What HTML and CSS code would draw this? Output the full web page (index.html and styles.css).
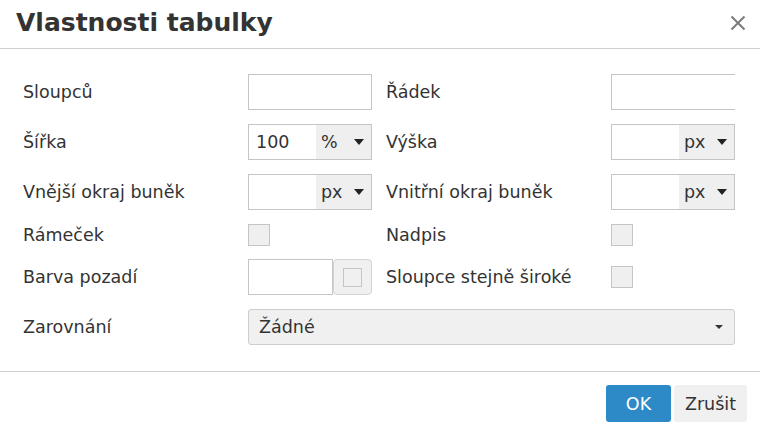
FILE: index.html
```html
<!DOCTYPE html>
<html lang="cs">
<head>
<meta charset="utf-8">
<title>Vlastnosti tabulky</title>
<link rel="stylesheet" href="styles.css">
</head>
<body>
<div class="dialog">
  <div class="head">
    <h1 class="title">Vlastnosti tabulky</h1>
    <button class="close" aria-label="Zavřít">
      <svg width="16" height="16" viewBox="0 0 16 16"><path d="M1.5 1.5 L14.5 14.5 M14.5 1.5 L1.5 14.5" stroke="#7b7b7b" stroke-width="2" fill="none"/></svg>
    </button>
  </div>
  <div class="body">
    <div class="form">
      <label class="lbl">Sloupců</label>
      <div class="ctl"><div class="input"></div></div>
      <label class="lbl lbl-r">Řádek</label>
      <div class="ctl"><div class="input wide"></div></div>

      <label class="lbl">Šířka</label>
      <div class="ctl"><div class="combo"><span class="val">100</span><span class="unit">%<i class="caret"></i></span></div></div>
      <label class="lbl lbl-r">Výška</label>
      <div class="ctl"><div class="combo"><span class="val"></span><span class="unit">px<i class="caret"></i></span></div></div>

      <label class="lbl">Vnější okraj buněk</label>
      <div class="ctl"><div class="combo"><span class="val"></span><span class="unit">px<i class="caret"></i></span></div></div>
      <label class="lbl lbl-r">Vnitřní okraj buněk</label>
      <div class="ctl"><div class="combo"><span class="val"></span><span class="unit">px<i class="caret"></i></span></div></div>

      <label class="lbl">Rámeček</label>
      <div class="ctl"><span class="check"></span></div>
      <label class="lbl lbl-r">Nadpis</label>
      <div class="ctl"><span class="check"></span></div>

      <label class="lbl">Barva pozadí</label>
      <div class="ctl"><div class="color"><span class="color-in"></span><span class="color-btn"><span class="swatch"></span></span></div></div>
      <label class="lbl lbl-r">Sloupce stejně široké</label>
      <div class="ctl"><span class="check"></span></div>

      <label class="lbl">Zarovnání</label>
      <div class="ctl span"><div class="select"><span>Žádné</span><i class="caret small"></i></div></div>
    </div>
  </div>
  <div class="foot">
    <button class="btn primary">OK</button>
    <button class="btn">Zrušit</button>
  </div>
</div>
</body>
</html>
```

FILE: styles.css
```css
* { box-sizing: border-box; }
html, body { margin: 0; padding: 0; background: #fff; }
body {
  font-family: "DejaVu Sans", Verdana, sans-serif;
  font-size: 17.5px;
  color: #333;
  width: 760px;
  height: 435px;
  overflow: hidden;
}
.dialog { width: 760px; }
.head {
  height: 49px;
  border-bottom: 1px solid #cfcfcf;
  display: flex;
  align-items: flex-start;
  justify-content: space-between;
}
.title {
  margin: 0;
  padding: 7px 0 0 16px;
  font-size: 25px;
  font-weight: bold;
  line-height: 32px;
  color: #333;
}
.close {
  border: 0;
  background: none;
  padding: 0;
  margin: 15px 14px 0 0;
  width: 16px;
  height: 16px;
  display: flex;
}
.body {
  padding: 25px 0 26px 23px;
  border-bottom: 1px solid #cfcfcf;
}
.form {
  width: 712px;
  overflow: hidden;
  display: grid;
  grid-template-columns: 225px 124px 239px 124px;
  grid-template-rows: 36px 36px 36px 21px 36px 36px;
  row-gap: 14px;
}
.lbl {
  display: flex;
  align-items: center;
  white-space: nowrap;
}
.lbl-r { padding-left: 14px; }
.ctl { display: flex; align-items: center; }
.ctl.span { grid-column: 2 / 5; }
.input {
  width: 124px;
  height: 36px;
  border: 1px solid #c5c5c5;
  background: #fff;
  flex: none;
}
.input.wide { width: 140px; }
.combo {
  width: 124px;
  height: 36px;
  border: 1px solid #c5c5c5;
  display: flex;
  background: #fff;
}
.val {
  width: 67px;
  padding-left: 7px;
  display: flex;
  align-items: center;
}
.unit {
  flex: 1;
  background: #efefef;
  display: flex;
  align-items: center;
  padding-left: 5px;
}
.caret {
  display: inline-block;
  width: 0;
  height: 0;
  border-left: 5.5px solid transparent;
  border-right: 5.5px solid transparent;
  border-top: 6px solid #222;
  margin-left: auto;
  margin-right: 7px;
}
.caret.small {
  border-left-width: 4px;
  border-right-width: 4px;
  border-top-width: 4px;
  border-top-color: #333;
  margin-right: 11px;
}
.check {
  width: 22px;
  height: 22px;
  border: 1px solid #c5c5c5;
  background: #efefef;
  display: block;
}
.color { display: flex; height: 36px; }
.color-in {
  width: 85px;
  height: 36px;
  border: 1px solid #c5c5c5;
  background: #fff;
}
.color-btn {
  width: 39px;
  height: 36px;
  border: 1px solid #d3d3d3;
  border-radius: 4px;
  background: #f0f0f0;
  display: flex;
  align-items: center;
  justify-content: center;
}
.swatch {
  width: 19px;
  height: 19px;
  border: 1px solid #c5c5c5;
  background: #f0f0f0;
  margin-left: -1px;
}
.select {
  width: 487px;
  height: 36px;
  border: 1px solid #cdcdcd;
  border-radius: 3px;
  background: #f0f0f0;
  display: flex;
  align-items: center;
  padding-left: 10px;
}
.foot {
  display: flex;
  justify-content: flex-end;
  gap: 3px;
  padding: 13px 13px 0 0;
}
.btn {
  font-family: "DejaVu Sans", Verdana, sans-serif;
  font-size: 17.5px;
  height: 37px;
  border: 0;
  border-radius: 3px;
  background: #f0f0f0;
  color: #333;
  padding: 0;
  width: 73px;
}
.btn.primary {
  width: 65px;
  background: #2d8ac7;
  color: #fff;
}
```
